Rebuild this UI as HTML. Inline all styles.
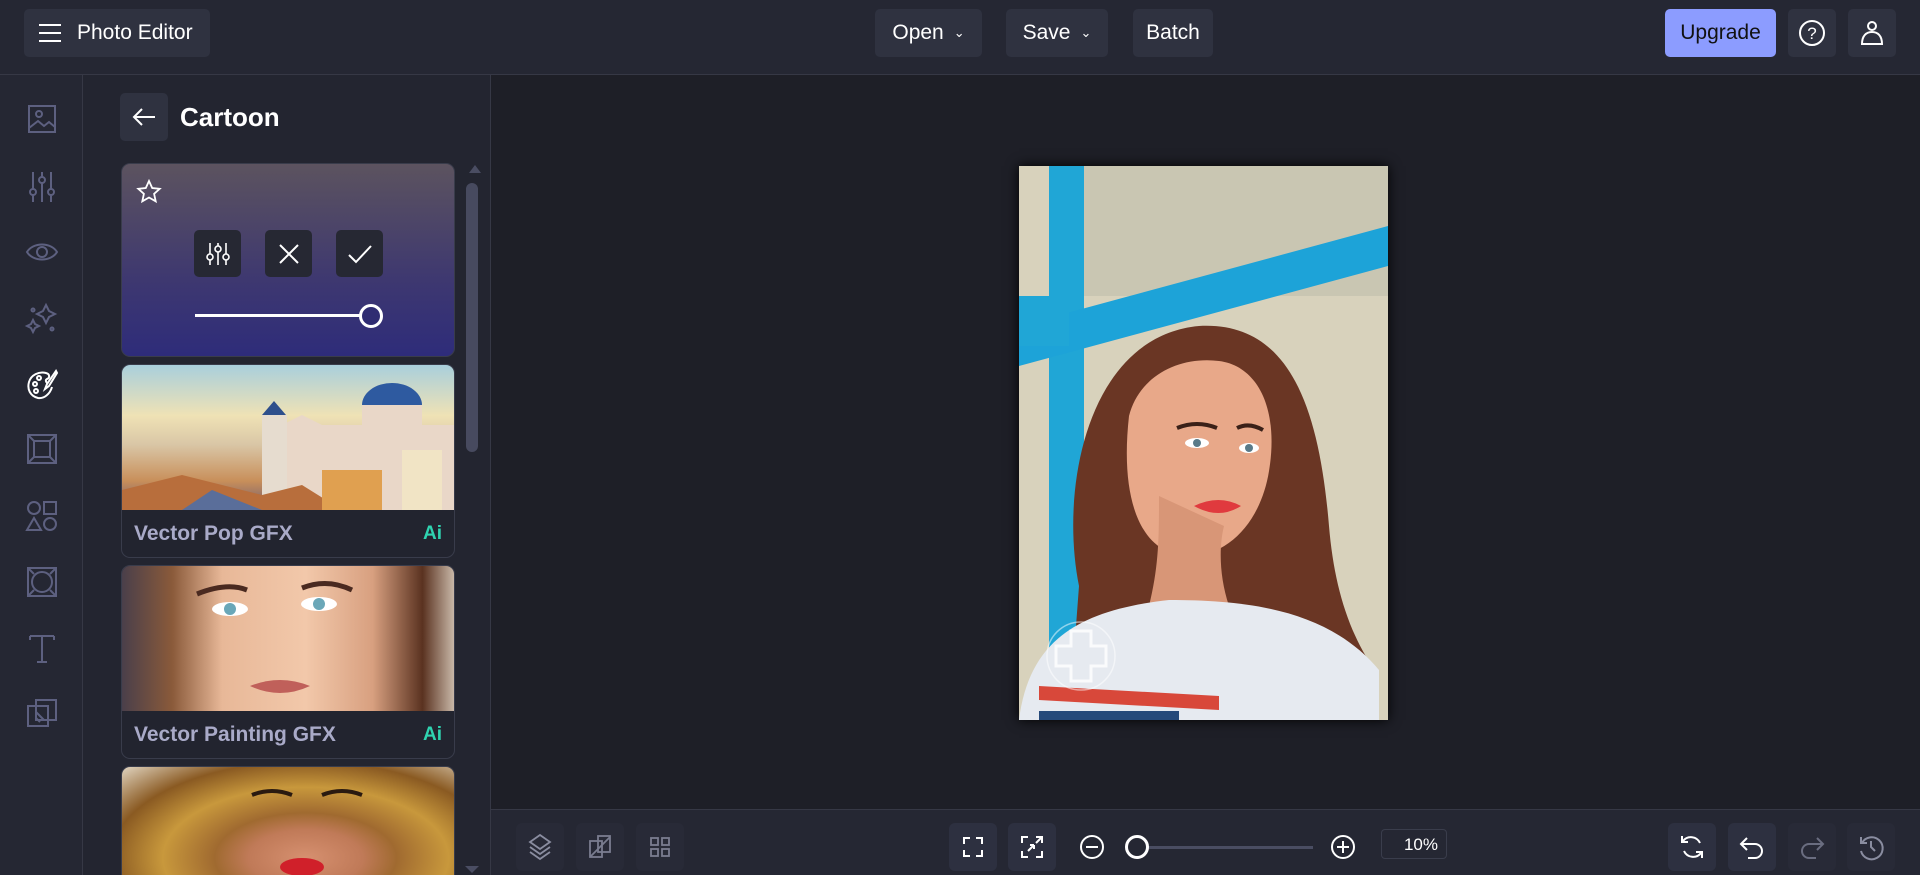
<!DOCTYPE html>
<html style="width:1920px;height:875px;overflow:hidden"><head><meta charset="utf-8"><style>
*{box-sizing:border-box;margin:0;padding:0}
body{width:1920px;height:875px;background:#1e1f27;font-family:"Liberation Sans",sans-serif;color:#fff;position:relative;overflow:hidden}
.a{position:absolute}
.hdr{left:0;top:0;width:1920px;height:75px;background:#252733;border-bottom:1px solid #363845}
.btn{position:absolute;background:#2f3240;border-radius:5px;display:flex;align-items:center;justify-content:center;font-size:21px;color:#fff}
.rail{left:0;top:75px;width:83px;height:800px;background:#252733;border-right:1px solid #363845}
.panel{left:83px;top:75px;width:408px;height:800px;background:#232530;border-right:1px solid #363845}
.ic{position:absolute;left:24px;width:36px;height:36px}
.card{position:absolute;left:121px;width:334px;border:1px solid #393c4b;border-radius:9px;overflow:hidden;background:#22242f}
.lbl{position:absolute;left:12px;font-weight:bold;font-size:21px;color:#a9aac8}
.ai{position:absolute;right:12px;font-size:19px;color:#2fd3b0;font-weight:bold}
.bot{left:491px;top:809px;width:1429px;height:66px;background:#252733;border-top:1px solid #363845}
.bb{position:absolute;top:13px;width:48px;height:48px;background:#2d3040;border-radius:6px}
.bb.d{background:#282a37}
</style></head><body>
<div class="a hdr"></div>
<div class="btn" style="left:24px;top:9px;width:186px;height:48px;justify-content:flex-start;padding-left:14px">
<svg width="24" height="20"><path d="M1 2h22M1 10h22M1 18h22" stroke="#fff" stroke-width="2"/></svg><span style="margin-left:15px">Photo Editor</span></div>
<div class="btn" style="left:875px;top:9px;width:107px;height:48px">Open <span style="font-size:13px;margin-left:10px">&#8964;</span></div>
<div class="btn" style="left:1006px;top:9px;width:102px;height:48px">Save <span style="font-size:13px;margin-left:10px">&#8964;</span></div>
<div class="btn" style="left:1133px;top:9px;width:80px;height:48px">Batch</div>
<div class="btn" style="left:1665px;top:9px;width:111px;height:48px;background:#8c9cff;color:#111">Upgrade</div>
<div class="btn" style="left:1788px;top:9px;width:48px;height:48px"><svg width="30" height="30"><circle cx="15" cy="15" r="12" fill="none" stroke="#fff" stroke-width="2"/><text x="15" y="21" text-anchor="middle" font-size="17" fill="#fff" font-family="Liberation Sans">?</text></svg></div>
<div class="btn" style="left:1848px;top:9px;width:48px;height:48px"><svg width="30" height="30"><circle cx="15" cy="8" r="4" fill="none" stroke="#fff" stroke-width="2"/><path d="M5 26c0-8 4-12 10-12s10 4 10 12z" fill="none" stroke="#fff" stroke-width="2"/></svg></div>

<div class="a rail">
<svg class="ic" style="top:26px" viewBox="0 0 36 36" fill="none" stroke="#5d6080" stroke-width="2"><rect x="5" y="5" width="26" height="26"/><circle cx="15" cy="13" r="3"/><path d="M5 27l9-7 6 5 5-4 6 5"/></svg>
<svg class="ic" style="top:93px" viewBox="0 0 36 36" fill="none" stroke="#5d6080" stroke-width="2"><path d="M9 4v30M18 4v30M27 4v30"/><circle cx="9" cy="24" r="3" fill="#252733"/><circle cx="18" cy="12" r="3" fill="#252733"/><circle cx="27" cy="24" r="3" fill="#252733"/></svg>
<svg class="ic" style="top:159px" viewBox="0 0 36 36" fill="none" stroke="#5d6080" stroke-width="2"><path d="M3 18c6-10 24-10 30 0c-6 10-24 10-30 0z"/><circle cx="18" cy="18" r="5"/></svg>
<svg class="ic" style="top:225px" viewBox="0 0 36 36" fill="none" stroke="#5d6080" stroke-width="2"><path d="M22 5l3 6 6 3-6 3-3 6-3-6-6-3 6-3z M9 20l2 4 4 2-4 2-2 4-2-4-4-2 4-2z"/><circle cx="9" cy="10" r="1.5"/><circle cx="28" cy="29" r="1.5"/></svg>
<svg class="ic" style="top:292px" viewBox="0 0 36 36" fill="none" stroke="#fff" stroke-width="2"><path d="M28 20c-2 7-8 12-14 11C6 29 3 22 5 15S15 4 22 6c4 1 4 5 1 6-2 1-1 4 1 4"/><circle cx="11" cy="17" r="2"/><circle cx="15" cy="11" r="2"/><circle cx="12" cy="24" r="2"/><path d="M32 4l-9 13-2 5 4-3 8-13z"/></svg>
<svg class="ic" style="top:356px" viewBox="0 0 36 36" fill="none" stroke="#5d6080" stroke-width="2"><rect x="4" y="4" width="28" height="28"/><rect x="10" y="10" width="16" height="16"/><path d="M4 4l6 6M32 4l-6 6M4 32l6-6M32 32l-6-6"/></svg>
<svg class="ic" style="top:423px" viewBox="0 0 36 36" fill="none" stroke="#5d6080" stroke-width="2"><circle cx="10" cy="10" r="6"/><rect x="20" y="4" width="12" height="12"/><path d="M10 20l7 12H3z"/><circle cx="26" cy="26" r="6"/></svg>
<svg class="ic" style="top:489px" viewBox="0 0 36 36" fill="none" stroke="#5d6080" stroke-width="2"><rect x="4" y="4" width="28" height="28"/><circle cx="18" cy="18" r="10"/><path d="M4 4l6 6M32 4l-6 6M4 32l6-6M32 32l-6-6"/></svg>
<svg class="ic" style="top:555px" viewBox="0 0 36 36" fill="none" stroke="#5d6080" stroke-width="2"><path d="M6 6h24M18 6v26M6 6v4M30 6v4M13 32h10"/></svg>
<svg class="ic" style="top:621px" viewBox="0 0 36 36" fill="none" stroke="#5d6080" stroke-width="2"><rect x="4" y="10" width="20" height="20"/><rect x="12" y="4" width="20" height="20"/><path d="M12 16l8 8M12 22l4 4"/></svg>
</div>

<div class="a panel"></div>
<div class="btn" style="left:120px;top:93px;width:48px;height:48px"><svg width="24" height="20"><path d="M23 10H2M10 2L2 10l8 8" stroke="#fff" stroke-width="2" fill="none"/></svg></div>
<div class="a" style="left:180px;top:102px;font-size:26px;font-weight:bold">Cartoon</div>

<div class="card" style="top:163px;height:194px;background:linear-gradient(#5c535f,#3e3870 60%,#2e2c7a)">
<svg class="a" style="left:14px;top:15px" width="26" height="26" viewBox="0 0 26 26"><path d="M13 2l3.2 7 7.5.8-5.6 5 1.6 7.5L13 18.5 6.3 22.3 7.9 14.8 2.3 9.8l7.5-.8z" fill="none" stroke="#fff" stroke-width="1.8"/></svg>
<div class="btn" style="left:72px;top:66px;width:47px;height:47px;background:#262833"><svg width="24" height="26" fill="none" stroke="#fff" stroke-width="1.6"><path d="M4 2v22M12 2v22M20 2v22"/><circle cx="4" cy="16" r="3" fill="#262833"/><circle cx="12" cy="8" r="3" fill="#262833"/><circle cx="20" cy="16" r="3" fill="#262833"/></svg></div>
<div class="btn" style="left:143px;top:66px;width:47px;height:47px;background:#262833"><svg width="22" height="22"><path d="M2 2l18 18M20 2L2 20" stroke="#fff" stroke-width="2"/></svg></div>
<div class="btn" style="left:214px;top:66px;width:47px;height:47px;background:#262833"><svg width="26" height="22"><path d="M2 12l7 7L24 3" stroke="#fff" stroke-width="2" fill="none"/></svg></div>
<div class="a" style="left:73px;top:150px;width:170px;height:3px;background:#fff"></div>
<div class="a" style="left:237px;top:140px;width:24px;height:24px;border:3px solid #fff;border-radius:50%;background:#2f2c72"></div>
</div>
<div class="a" style="left:469px;top:165px;width:0;height:0;border:6px solid transparent;border-bottom:8px solid #4a4d62;border-top:0"></div>
<div class="a" style="left:466px;top:183px;width:12px;height:269px;background:#474a5f;border-radius:6px"></div>
<div class="a" style="left:465px;top:866px;width:0;height:0;border:7px solid transparent;border-top:7px solid #4a4d62"></div>

<div class="card" style="top:364px;height:194px">
<div class="a" style="left:0;top:0;width:334px;height:145px;background:linear-gradient(180deg,#a9cfdc 0%,#efe2b5 35%,#d9c6a6 55%,#c88f5a 80%,#6e5a70 100%)"></div>
<svg class="a" style="left:0;top:0" width="334" height="145"><path d="M160 145V60l20-10 20 10h40V40l30-15 30 15v20h34v85z" fill="#e9d7c8"/><path d="M240 40a30 22 0 0 1 60 0z" fill="#2e5aa0"/><path d="M140 145V50h25v95z" fill="#e6dccf"/><path d="M140 50l12-14 12 14z" fill="#2e4f8c"/><path d="M0 145v-20l60-15 80 20 40-10 40 25z" fill="#b86e3c"/><path d="M200 145v-40h60v40z" fill="#e0a050"/><path d="M280 145v-60h40v60z" fill="#f1e4c5"/><path d="M60 145l30-20 50 20z" fill="#5a6e9a"/></svg>
<div class="lbl" style="top:157px">Vector Pop GFX</div><div class="ai" style="top:158px">Ai</div>
</div>
<div class="card" style="top:565px;height:194px">
<div class="a" style="left:0;top:0;width:334px;height:145px;background:linear-gradient(90deg,#4a3f4a,#8a5a3a 15%,#e8b898 30%,#f2c8aa 55%,#d8a080 75%,#5a3220 90%,#cfc0b0)"></div>
<svg class="a" style="left:0;top:0" width="334" height="145"><path d="M75 28q30-12 50-4M180 22q25-10 50 2" stroke="#4a2a20" stroke-width="5" fill="none"/><ellipse cx="108" cy="43" rx="18" ry="7" fill="#fff"/><circle cx="108" cy="43" r="6" fill="#6aa7b8"/><ellipse cx="197" cy="38" rx="18" ry="7" fill="#fff"/><circle cx="197" cy="38" r="6" fill="#6aa7b8"/><path d="M128 120q30-12 60 0q-30 14-60 0z" fill="#c0605a"/></svg>
<div class="lbl" style="top:157px">Vector Painting GFX</div><div class="ai" style="top:158px">Ai</div>
</div>
<div class="card" style="top:766px;height:109px;border-bottom:0;border-radius:9px 9px 0 0">
<div class="a" style="left:0;top:0;width:334px;height:130px;background:radial-gradient(ellipse at 55% 70%,#d69070 0,#c07a58 22%,#a06a30 35%,#c8983c 55%,#8a5a22 75%,#e0d4c0 100%)"></div>
<svg class="a" style="left:0;top:0" width="334" height="109"><ellipse cx="180" cy="100" rx="22" ry="9" fill="#d0202a"/><path d="M130 28q20-8 40 0M200 28q20-8 40 0" stroke="#2a1a10" stroke-width="4" fill="none"/></svg>
</div>

<svg class="a" style="left:1019px;top:166px;box-shadow:0 0 12px #000" width="369" height="554" viewBox="0 0 369 554">
<rect width="369" height="554" fill="#d8d2bc"/>
<rect x="60" y="0" width="309" height="130" fill="#c9c6b2"/>
<path d="M30 0h35v554H30z" fill="#20a6d6"/>
<path d="M0 160L369 60v40L0 200z" fill="#1da3d8"/>
<path d="M0 130h50v50H0z" fill="#20a6d6"/>
<path d="M60 420C40 320 70 170 180 160c90-5 120 80 130 200 5 60 20 110 50 150v44H50z" fill="#6a3624"/>
<path d="M110 250c10-40 50-60 90-55 40 5 60 50 50 110-8 50-40 85-80 85-45 0-70-50-60-140z" fill="#e8a889"/>
<path d="M140 330c0 40 0 70-10 110h80c-10-30-10-60-5-80z" fill="#d89677"/>
<path d="M158 262q20-8 40 0M218 262q12-6 26 2" stroke="#3a2018" stroke-width="4" fill="none"/>
<ellipse cx="178" cy="277" rx="12" ry="5" fill="#fff"/><circle cx="178" cy="277" r="4" fill="#5a7a88"/>
<ellipse cx="230" cy="282" rx="10" ry="5" fill="#fff"/><circle cx="230" cy="282" r="4" fill="#5a7a88"/>
<path d="M175 340q25-12 47 0q-22 14-47 0z" fill="#e03a3e"/>
<path d="M0 554c10-80 60-110 150-120 80 0 160 10 210 70v50z" fill="#e6eaf0"/>
<path d="M20 520l180 10v14L20 534z" fill="#d8483a"/>
<path d="M20 545h140v9H20z" fill="#264a7a"/>
<circle cx="62" cy="490" r="34" fill="none" stroke="#fff" stroke-opacity=".5" stroke-width="1.5"/>
<path d="M52 465h20v15h15v20H72v15H52v-15H37v-20h15z" fill="none" stroke="#fff" stroke-opacity=".8" stroke-width="3"/>
</svg>

<div class="a bot">
<div class="bb d" style="left:25px"><svg width="48" height="48" fill="none" stroke="#8a8da0" stroke-width="1.8"><path d="M24 12l10 7-10 7-10-7z M14 24l10 7 10-7 M14 29l10 7 10-7"/></svg></div>
<div class="bb d" style="left:85px"><svg width="48" height="48" fill="none" stroke="#7a7d90" stroke-width="1.8"><rect x="14" y="18" width="12" height="16"/><rect x="22" y="13" width="12" height="16"/><path d="M14 34l20-20"/></svg></div>
<div class="bb d" style="left:145px"><svg width="48" height="48" fill="none" stroke="#7a7d90" stroke-width="1.8"><rect x="15" y="15" width="7" height="7"/><rect x="26" y="15" width="7" height="7"/><rect x="15" y="26" width="7" height="7"/><rect x="26" y="26" width="7" height="7"/></svg></div>
<div class="bb" style="left:458px"><svg width="48" height="48" fill="none" stroke="#fff" stroke-width="2"><path d="M15 21v-6h6M27 15h6v6M33 27v6h-6M21 33h-6v-6"/></svg></div>
<div class="bb" style="left:517px"><svg width="48" height="48" fill="none" stroke="#fff" stroke-width="2"><path d="M14 20v-6h6M34 20v-6h-6M14 28v6h6M34 28v6h-6M20 28l6-6M26 22h-4M26 22v4M28 20l6-6"/></svg></div>
<svg class="a" style="left:588px;top:24px" width="26" height="26" fill="none" stroke="#fff" stroke-width="2"><circle cx="13" cy="13" r="11"/><path d="M7 13h12"/></svg>
<div class="a" style="left:656px;top:36px;width:166px;height:3px;background:#4a4d62"></div>
<div class="a" style="left:634px;top:25px;width:24px;height:24px;border:3px solid #fff;border-radius:50%;background:#252733"></div>
<svg class="a" style="left:839px;top:24px" width="26" height="26" fill="none" stroke="#fff" stroke-width="2"><circle cx="13" cy="13" r="11"/><path d="M7 13h12M13 7v12"/></svg>
<div class="a" style="left:890px;top:19px;width:66px;height:30px;border:1px solid #3a3d4c;border-radius:4px;font-size:17px;text-align:right;padding:5px 8px 0 0">10%</div>
<div class="bb" style="left:1177px"><svg width="48" height="48" fill="none" stroke="#fff" stroke-width="2"><path d="M32 20a10 10 0 0 0-17-2M16 28a10 10 0 0 0 17 2M14 13v6h6M34 35v-6h-6"/></svg></div>
<div class="bb" style="left:1237px"><svg width="48" height="48" fill="none" stroke="#fff" stroke-width="2"><path d="M19 15l-6 6 6 6M13 21h14a7 7 0 0 1 0 14h-7"/></svg></div>
<div class="bb d" style="left:1297px"><svg width="48" height="48" fill="none" stroke="#6a6d80" stroke-width="2"><path d="M29 15l6 6-6 6M35 21H21a7 7 0 0 0 0 14h7"/></svg></div>
<div class="bb d" style="left:1356px"><svg width="48" height="48" fill="none" stroke="#8a8da0" stroke-width="2"><path d="M15 20a11 11 0 1 1-1 8M14 14v6h6M24 18v6l4 4"/></svg></div>
</div>
</body></html>
